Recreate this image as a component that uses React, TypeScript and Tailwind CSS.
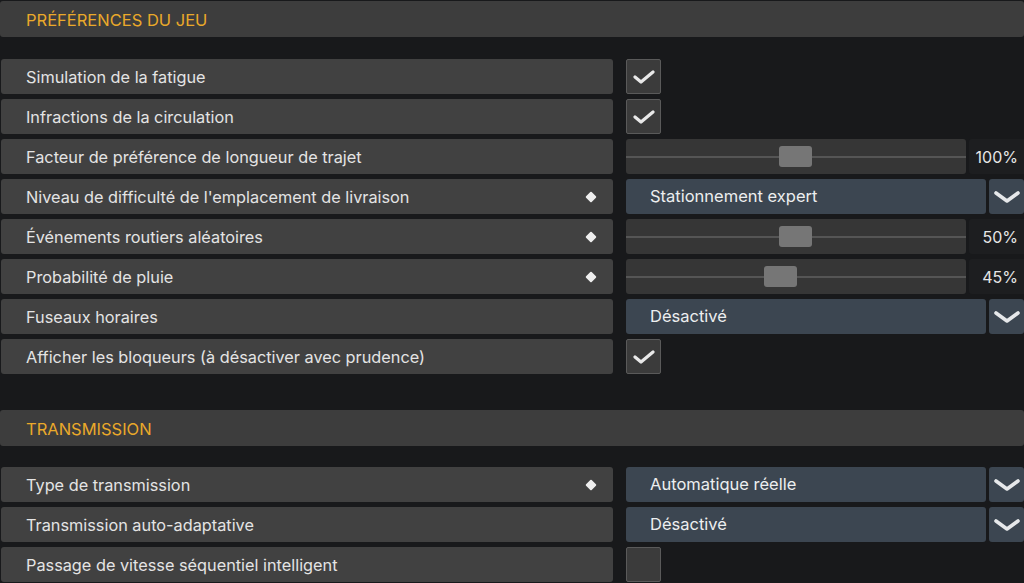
import React from 'react';

type Row =
  | { label: string; diamond?: boolean; kind: 'check'; checked: boolean }
  | { label: string; diamond?: boolean; kind: 'slider'; value: number; pos: number }
  | { label: string; diamond?: boolean; kind: 'select'; value: string };

const JEU: Row[] = [
  { label: 'Simulation de la fatigue', kind: 'check', checked: true },
  { label: 'Infractions de la circulation', kind: 'check', checked: true },
  { label: 'Facteur de préférence de longueur de trajet', kind: 'slider', value: 100, pos: 153 },
  { label: "Niveau de difficulté de l'emplacement de livraison", diamond: true, kind: 'select', value: 'Stationnement expert' },
  { label: 'Événements routiers aléatoires', diamond: true, kind: 'slider', value: 50, pos: 153 },
  { label: 'Probabilité de pluie', diamond: true, kind: 'slider', value: 45, pos: 138 },
  { label: 'Fuseaux horaires', kind: 'select', value: 'Désactivé' },
  { label: 'Afficher les bloqueurs (à désactiver avec prudence)', kind: 'check', checked: true },
];

const TRANS: Row[] = [
  { label: 'Type de transmission', diamond: true, kind: 'select', value: 'Automatique réelle' },
  { label: 'Transmission auto-adaptative', kind: 'select', value: 'Désactivé' },
  { label: 'Passage de vitesse séquentiel intelligent', kind: 'check', checked: false },
];

function Check() {
  return (
    <svg width="22" height="14" viewBox="0 0 22 14" fill="none">
      <path d="M2 7 L8 12 L20 2" stroke="#e8e8e8" strokeWidth="3.2" strokeLinecap="round" strokeLinejoin="round" />
    </svg>
  );
}

function Chevron() {
  return (
    <svg width="28" height="14" viewBox="0 0 28 14" fill="none">
      <path d="M3 3 L14 11 L25 3" stroke="#e6e8ea" strokeWidth="3.6" strokeLinecap="round" strokeLinejoin="round" />
    </svg>
  );
}

function Control({ row }: { row: Row }) {
  if (row.kind === 'check') {
    return (
      <div className="flex h-[35px] w-[35px] items-center justify-center rounded-[2px] border border-[#5a5a5a] bg-[#3b3b3b]">
        {row.checked && <Check />}
      </div>
    );
  }
  if (row.kind === 'slider') {
    return (
      <div className="flex h-[35px] flex-1 items-center gap-[3px]">
        <div className="relative h-full w-[340px] rounded-[3px] bg-[#363636]">
          <div className="absolute top-[17px] left-0 right-0 h-[2px] bg-[#555555]" />
          <div
            className="absolute top-[7px] h-[21px] w-[33px] rounded-[3px] bg-[#767676]"
            style={{ left: row.pos }}
          />
        </div>
        <div className="flex h-full flex-1 items-center justify-end rounded-l-[3px] bg-[#1d1e20] pr-[6px] text-[16px] text-[#e6e6e6]">
          {row.value}%
        </div>
      </div>
    );
  }
  return (
    <div className="flex h-[35px] flex-1 gap-[3px]">
      <div className="flex w-[360px] items-center rounded-[3px] bg-[#3c4651] pl-[24px] text-[16.5px] text-[#eceeef]">
        {row.value}
      </div>
      <div className="flex flex-1 items-center justify-center rounded-[3px] bg-[#3c4651]">
        <Chevron />
      </div>
    </div>
  );
}

function SettingRow({ row }: { row: Row }) {
  return (
    <div className="flex h-[35px] items-center gap-[13px]">
      <div className="ml-[1px] flex h-full w-[612px] items-center justify-between rounded-[3px] bg-[#414141] pl-[25px] pr-[16px] text-[16.3px] text-[#e4e4e4]">
        <span className="pt-[2px]">{row.label}</span>
        {row.diamond && <span className="mr-[2px] h-[8px] w-[8px] rotate-45 rounded-[1px] bg-[#eeeeee]" />}
      </div>
      <Control row={row} />
    </div>
  );
}

function Header({ title }: { title: string }) {
  return (
    <div className="flex h-[36px] items-center rounded-[3px] bg-[#3d3d3d] pl-[26px] pt-[2px] text-[16.5px] text-[#eaa92a]">
      {title}
    </div>
  );
}

export default function App() {
  return (
    <div
      className="h-[583px] w-[1024px] overflow-hidden bg-[#18191b] pt-[1px]"
      style={{ fontFamily: 'Inter, "Noto Sans", sans-serif' }}
    >
      <Header title="PRÉFÉRENCES DU JEU" />
      <div className="mt-[22px] flex flex-col gap-[5px]">
        {JEU.map((r) => (
          <SettingRow key={r.label} row={r} />
        ))}
      </div>
      <div className="mt-[36px]">
        <Header title="TRANSMISSION" />
      </div>
      <div className="mt-[21px] flex flex-col gap-[5px]">
        {TRANS.map((r) => (
          <SettingRow key={r.label} row={r} />
        ))}
      </div>
    </div>
  );
}
